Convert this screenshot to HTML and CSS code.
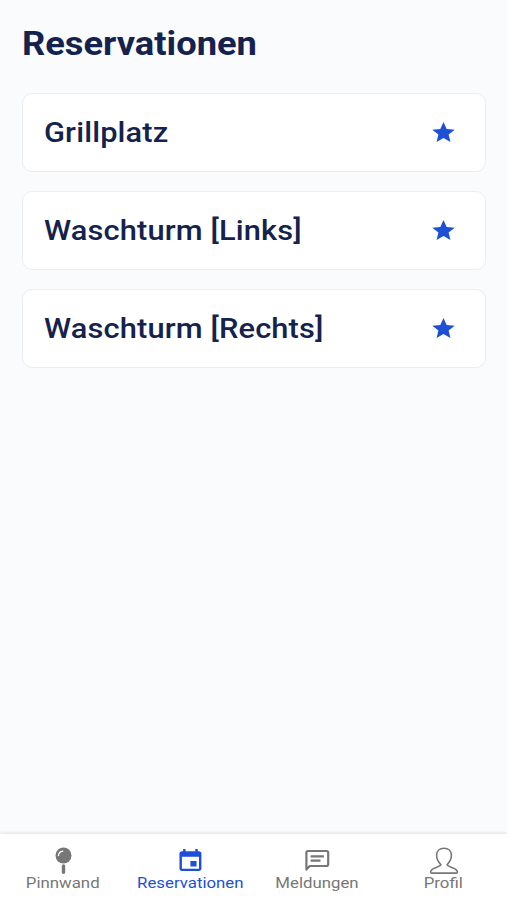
FILE: index.html
```html
<!DOCTYPE html>
<html lang="de">
<head>
<meta charset="utf-8">
<title>Reservationen</title>
<link rel="stylesheet" href="styles.css">
</head>
<body>
<svg class="defs" width="0" height="0" aria-hidden="true">
  <symbol id="star" viewBox="0 0 24 24" preserveAspectRatio="none"><path d="M12 17.27L18.18 21l-1.64-7.03L22 9.24l-7.19-.61L12 2 9.19 8.63 2 9.24l5.46 4.73L5.82 21z"/></symbol>
</svg>
<main class="content">
  <h1 class="title"><span class="wide">Reservationen</span></h1>
  <div class="list">
    <div class="card"><span class="wide">Grillplatz</span><svg class="star"><use href="#star"/></svg></div>
    <div class="card"><span class="wide">Waschturm [Links]</span><svg class="star"><use href="#star"/></svg></div>
    <div class="card"><span class="wide">Waschturm [Rechts]</span><svg class="star"><use href="#star"/></svg></div>
  </div>
</main>
<nav class="tabs">
  <a class="tab">
    <svg class="icon" viewBox="0 0 30 28"><circle cx="15.5" cy="8.5" r="8"/><path class="pin" d="M15.5 19V25.2"/><path class="shine" d="M10.500 8.500Q10.800 4.800 14.800 4.200"/></svg>
    <span class="wide">Pinnwand</span>
  </a>
  <a class="tab active">
    <svg class="icon" viewBox="0 0 30 28"><path transform="translate(.8 .9) scale(1.22 1.1)" d="M17 12h-5v5h5v-5zM16 1v2H8V1H6v2H5c-1.11 0-1.99.9-1.99 2L3 19c0 1.1.89 2 2 2h14c1.1 0 2-.9 2-2V5c0-1.1-.9-2-2-2h-1V1h-2zm3 18H5V8h14v11z"/></svg>
    <span class="wide">Reservationen</span>
  </a>
  <a class="tab">
    <svg class="icon" viewBox="0 0 30 28"><path class="bubble" d="M4.4 22.6V5.7Q4.4 4 6.1 4H24.5Q26.2 4 26.2 5.7V17.3Q26.2 19 24.5 19H7.800L4.400 22.600Z"/><path class="bubble" d="M8.600 9.400H21.900M8.600 13.600H18.500"/></svg>
    <span class="wide">Meldungen</span>
  </a>
  <a class="tab">
    <svg class="icon" viewBox="0 0 30 28"><path class="line" d="M11.9 17.7C9.8 15.7 7.6 12.1 7.6 8.1C7.6 3.7 10.7 1.2 15 1.2S22.4 3.7 22.4 8.1C22.4 12.1 20.2 15.7 18.1 17.7C18.5 20.3 28.4 20.3 28.4 25.1Q28.4 26.1 27.4 26.1H2.6Q1.6 26.1 1.6 25.1C1.6 20.3 11.5 20.3 11.9 17.7Z"/></svg>
    <span class="wide">Profil</span>
  </a>
</nav>
</body>
</html>
```
FILE: styles.css
```css
* { box-sizing: border-box; }
body {
  margin: 0;
  height: 900px;
  display: flex;
  flex-direction: column;
  overflow: hidden;
  background: #f9fbfd;
  color: #14224d;
  font-family: Roboto, "Liberation Sans", sans-serif;
}
.defs { position: absolute; }
.content { flex: 1; padding: 24px 21px 0 22px; }
.wide { display: inline-block; transform: scaleX(1.1); transform-origin: left center; }
.title { margin: 0; font-size: 33px; line-height: 40px; font-weight: 700; }
.list { display: flex; flex-direction: column; gap: 19px; margin-top: 29px; }
.card {
  height: 79px;
  padding: 0 28.5px 0 21px;
  display: flex;
  align-items: center;
  justify-content: space-between;
  background: #fff;
  border: 1px solid #e7eef7;
  border-radius: 10px;
  font-size: 28px;
  font-weight: 500;
  letter-spacing: .13px;
}
.star { width: 27px; height: 25px; fill: #1d4fd7; }
.tabs {
  height: 66px;
  display: flex;
  background: #fff;
  box-shadow: 0 -1px 3px rgba(40, 50, 70, .14);
  color: #777;
}
.tab {
  flex: 1;
  display: flex;
  flex-direction: column;
  align-items: center;
  padding-top: 13px;
  font-size: 15px;
  line-height: 18px;
}
.tab .wide { transform-origin: center; transform: translate(-.2px, .4px) scaleX(1.12); margin-top: -1px; }
.active { color: #1d4fd7; }
.icon { width: 30px; height: 28px; fill: currentColor; flex: none; }
.shine { fill: none; stroke: #fff; stroke-width: 1.3; stroke-linecap: round; }
.pin { stroke: currentColor; stroke-width: 3.4; stroke-linecap: round; }
.bubble { fill: none; stroke: currentColor; stroke-width: 2.2; stroke-linejoin: round; }
.line { fill: none; stroke: currentColor; stroke-width: 1.6; }
```
